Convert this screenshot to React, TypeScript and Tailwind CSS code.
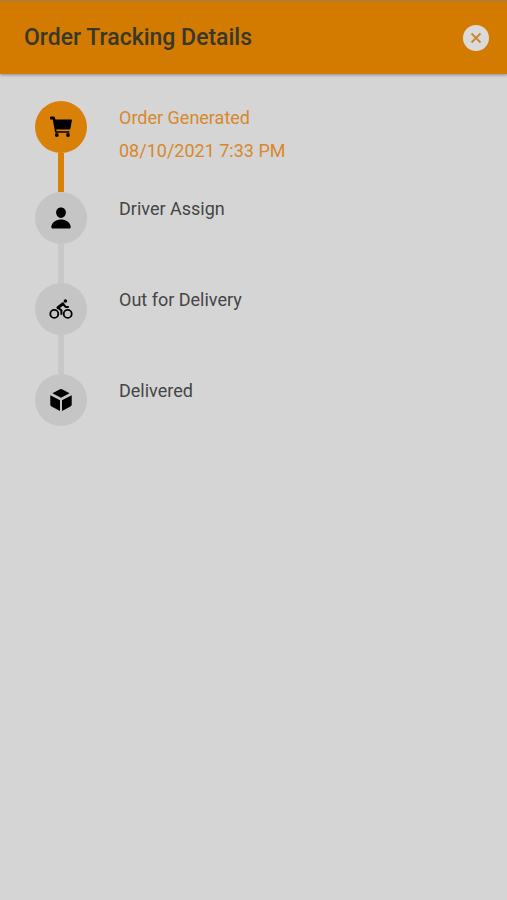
import React from 'react';
import { IoPerson } from 'react-icons/io5';

function CartIcon() {
  return (
    <svg viewBox="0 0 24 24" className="h-6 w-6" fill="currentColor" aria-hidden="true">
      <path d="M1 2.6a1 1 0 0 1 1-1h2.6a1.3 1.3 0 0 1 1.2.9l.6 2H22a.9.9 0 0 1 .9 1.1l-1.5 8a1.2 1.2 0 0 1-1.2 1H7.2l.3 1.6h12.9v1.6H6.2L3.7 4.4H2a1 1 0 0 1-1-1z" />
      <circle cx="7.8" cy="20" r="1.9" />
      <circle cx="19" cy="20" r="1.9" />
    </svg>
  );
}

function BikeIcon() {
  return (
    <svg viewBox="0 0 24 24" className="h-6 w-6" fill="none" stroke="currentColor" aria-hidden="true">
      <circle cx="5.3" cy="16.9" r="4" strokeWidth="1.8" />
      <circle cx="18.7" cy="16.9" r="4" strokeWidth="1.8" />
      <path d="M12.4 17.8v-4.4L9 10.8l4.8-4 3 3.2h3" strokeWidth="2" strokeLinejoin="round" />
      <path d="M9 10.7l4.8-3.9" strokeWidth="3" strokeLinecap="round" />
      <circle cx="16.4" cy="4" r="1.8" fill="currentColor" stroke="none" />
    </svg>
  );
}

function BoxIcon() {
  return (
    <svg viewBox="0 0 24 24" className="h-6 w-6" fill="currentColor" aria-hidden="true">
      <path d="M11 1.3a2.2 2.2 0 0 1 2 0l7.6 4L12 9.8 3.4 5.3z" />
      <path d="M1.3 7.2l9.7 5v10.7l-8.4-4.4a2.4 2.4 0 0 1-1.3-2.1z" />
      <path d="M22.7 7.2l-9.7 5v10.7l8.4-4.4a2.4 2.4 0 0 0 1.3-2.1z" />
    </svg>
  );
}

const steps = [
  {
    title: 'Order Generated',
    time: '08/10/2021 7:33 PM',
    icon: <CartIcon />,
    done: true,
  },
  { title: 'Driver Assign', icon: <IoPerson className="h-6 w-6" />, done: false },
  { title: 'Out for Delivery', icon: <BikeIcon />, done: false },
  { title: 'Delivered', icon: <BoxIcon />, done: false },
];

export default function App() {
  return (
    <div className="min-h-screen bg-[#d5d5d5] font-['Roboto',sans-serif]">
      {/* Header */}
      <header className="flex items-center justify-between border-t-2 border-[#b87a2c] bg-[#d37b00] pt-5 pr-[18px] pb-5 pl-6 shadow-[0_1px_3px_rgba(0,0,0,0.35)]">
        <h1 className="text-[23px] leading-8 font-medium text-[#38382a]">Order Tracking Details</h1>
        <button
          type="button"
          aria-label="Close"
          className="flex h-[26px] w-[26px] items-center justify-center rounded-full bg-[#dcdad8] text-[#c88a38]"
        >
          <svg viewBox="0 0 12 12" className="h-3 w-3" fill="none" stroke="currentColor" strokeWidth="2" aria-hidden="true">
            <path d="M1.5 1.5l9 9M10.5 1.5l-9 9" />
          </svg>
        </button>
      </header>

      {/* Steps */}
      <ol className="px-[35px] pt-[27px]">
        {steps.map((step, index) => (
          <li key={step.title} className="flex gap-8">
            <div className="flex flex-col items-center">
              <div
                className={`flex h-[52px] w-[52px] items-center justify-center rounded-full text-black ${
                  step.done ? 'bg-[#d98008]' : 'bg-[#c5c5c5]'
                }`}
              >
                {step.icon}
              </div>
              {index < steps.length - 1 && (
                <div className={`h-[39px] w-1.5 ${step.done ? 'bg-[#d98008]' : 'bg-[#c8c8c8]'}`} />
              )}
            </div>
            <div
              className={`text-lg leading-[33px] ${step.done ? 'text-[#d8882c]' : 'text-[#454545]'}`}
            >
              <p>{step.title}</p>
              {step.time && <p>{step.time}</p>}
            </div>
          </li>
        ))}
      </ol>
    </div>
  );
}
